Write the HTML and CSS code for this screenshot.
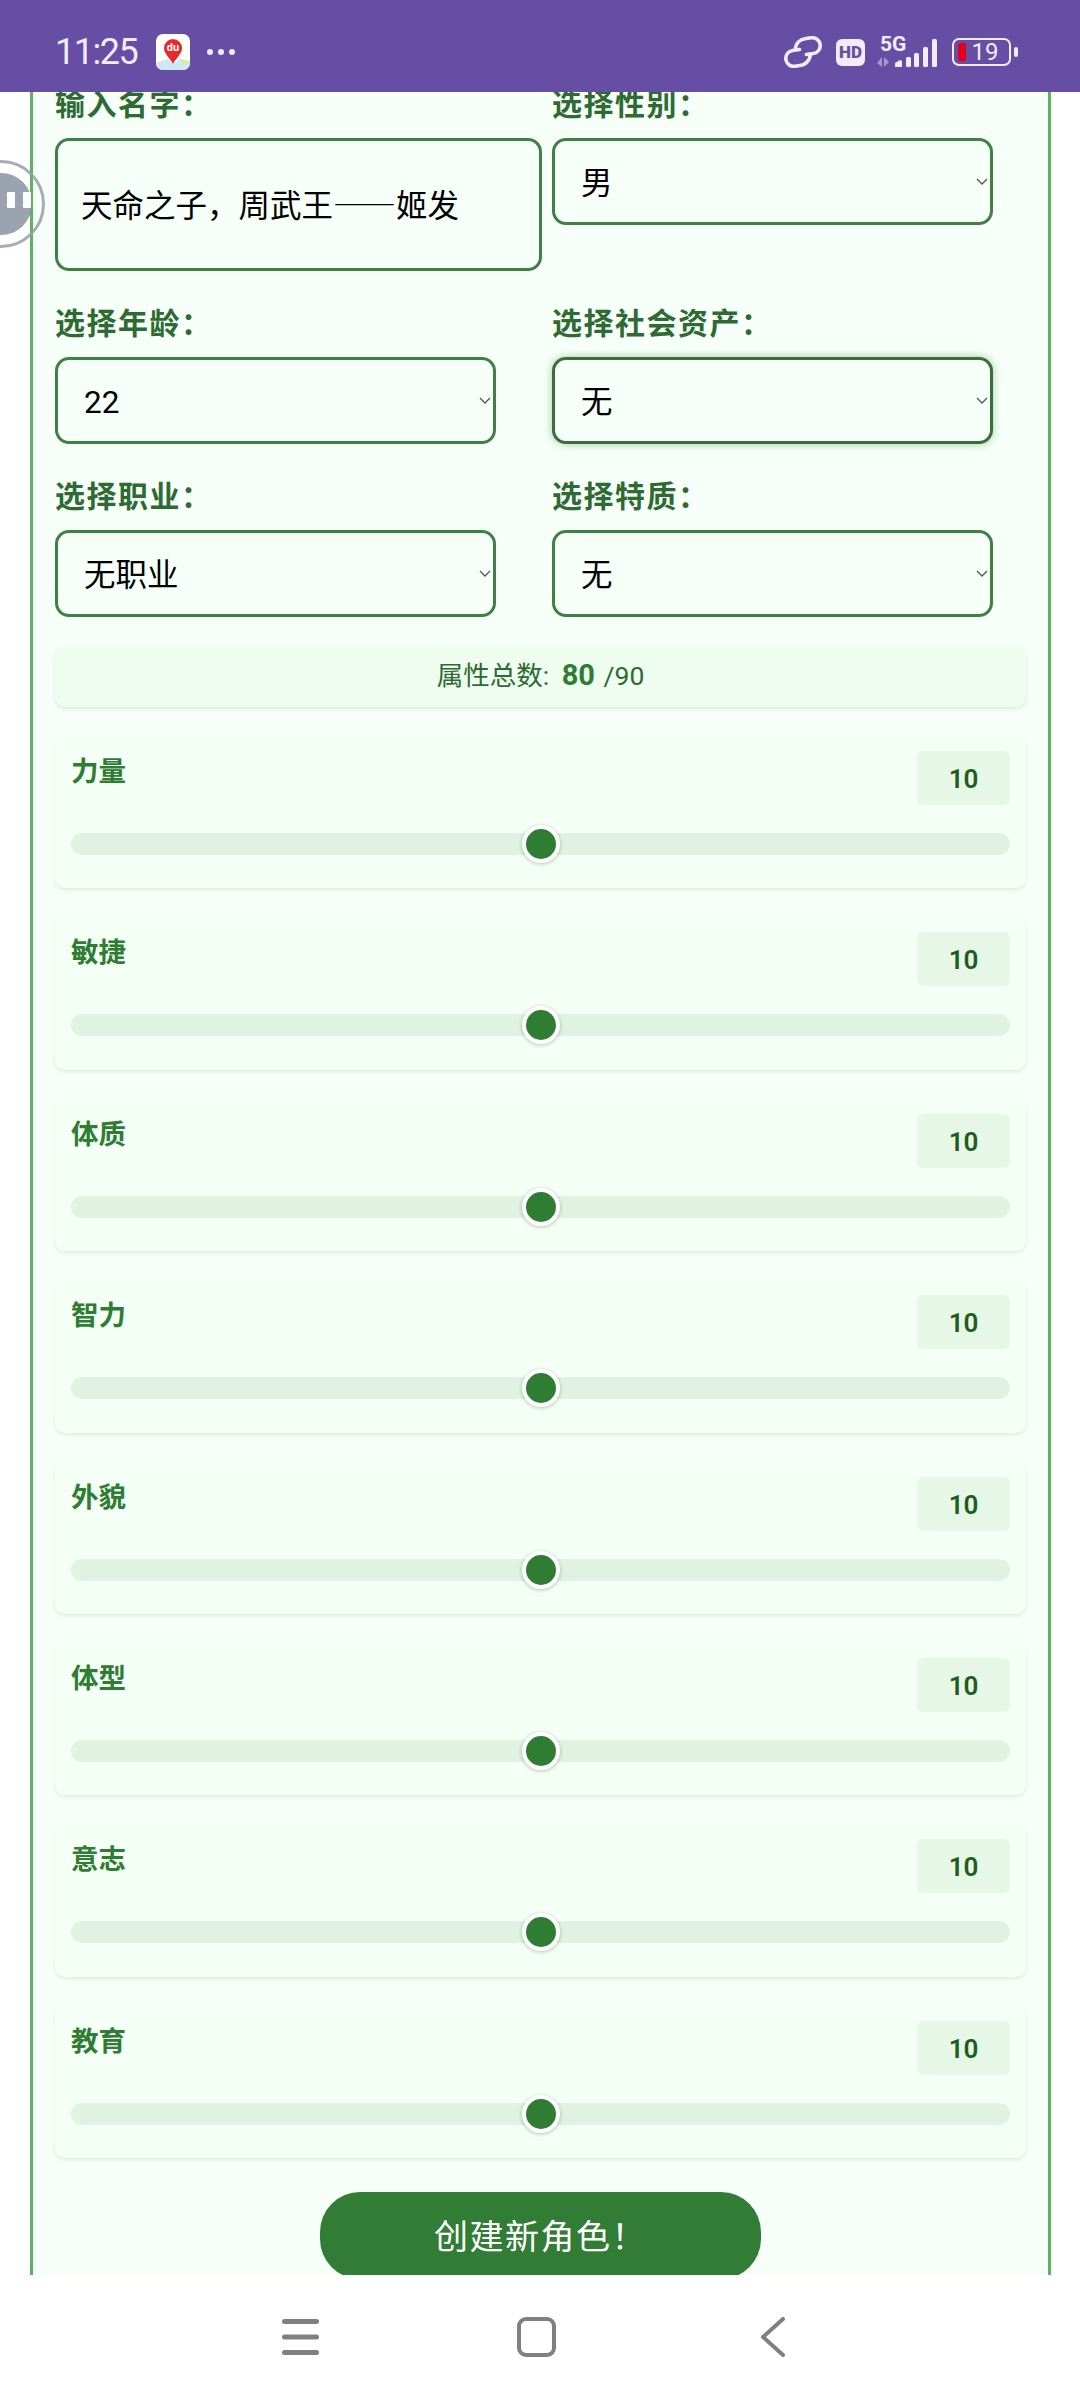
FILE: index.html
```html
<!DOCTYPE html>
<html lang="zh-CN">
<head>
    <meta charset="UTF-8">
    <meta name="viewport" content="width=device-width, initial-scale=1.0">
    <title>创建新角色</title>
    <link rel="stylesheet" href="styles.css">
</head>
<body>
    <div class="screen">
        <header class="status-bar">
            <div class="status-left">
                <span class="clock">11:25</span>
                <span class="map-icon">
                    <svg width="34" height="36" viewBox="0 0 34 36">
                        <rect width="34" height="36" rx="7" fill="#fff"/>
                        <path d="M0 29 L11 25 L17 30 L24 25 L34 28 V29 A7 7 0 0 1 27 36 H7 A7 7 0 0 1 0 29 Z" fill="#cfe8f7"/>
                        <path d="M24 25 L34 27 V30 L27 31 Z" fill="#d5eda0"/>
                        <path d="M17 30 C14 24 8 20 8 14 A9 9 0 0 1 26 14 C26 20 20 24 17 30 Z" fill="#e8282b"/>
                        <text x="17" y="17" class="map-du">du</text>
                    </svg>
                </span>
                <span class="dots"><i></i><i></i><i></i></span>
            </div>
            <div class="status-right">
                <svg class="link-icon" width="42" height="32" viewBox="0 0 42 32" fill="none" stroke="#f1ebfa" stroke-width="3.600" stroke-linecap="round">
                    <g transform="rotate(-8 21 16)">
                        <path d="M14 12 C15 6 20 3 26 3 H31 A8 8 0 0 1 31 19 H24"/>
                        <path d="M28 19 C27 25 22 29 16 29 H11 A8 8 0 0 1 11 13 H18"/>
                    </g>
                </svg>
                <span class="hd-icon">HD</span>
                <span class="signal">
                    <span class="net">5G</span>
                    <svg width="60" height="30" viewBox="0 0 60 30">
                        <path d="M5 19 V29 L0 25 Z M7 19 L12 24 L7 29 Z" fill="#a797cf"/>
                        <path d="M18 29 V25 L23 22 Q25 22 25 24 V29 Z" fill="#f1ebfa"/>
                        <rect x="29" y="19" width="5" height="10" rx="1.500" fill="#f1ebfa"/>
                        <rect x="37" y="15" width="5" height="14" rx="1.500" fill="#f1ebfa"/>
                        <rect x="46" y="9" width="5" height="20" rx="1.500" fill="#f1ebfa"/>
                        <rect x="55" y="1" width="5" height="28" rx="1.500" fill="#f1ebfa"/>
                    </svg>
                </span>
                <span class="battery">
                    <span class="battery-shell">
                        <span class="battery-fill"></span>
                        <span class="battery-num">19</span>
                    </span>
                    <span class="battery-tip"></span>
                </span>
            </div>
        </header>

        <main class="page">
            <div class="panel">
                <form class="form-grid">
                    <div class="field">
                        <label for="name">输入名字：</label>
                        <textarea id="name" class="name-input" rows="1">天命之子，周武王——姬发</textarea>
                    </div>
                    <div class="field">
                        <label for="gender">选择性别：</label>
                        <div class="select-wrap">
                            <select id="gender"><option>男</option><option>女</option></select>
                            <svg class="chevron" width="12" height="7" viewBox="0 0 12 7"><path d="M1 1 L6 6 L11 1" fill="none" stroke="#555" stroke-width="1.300"/></svg>
                        </div>
                    </div>
                    <div class="field">
                        <label for="age">选择年龄：</label>
                        <div class="select-wrap">
                            <select id="age"><option>22</option></select>
                            <svg class="chevron" width="12" height="7" viewBox="0 0 12 7"><path d="M1 1 L6 6 L11 1" fill="none" stroke="#555" stroke-width="1.300"/></svg>
                        </div>
                    </div>
                    <div class="field">
                        <label for="assets">选择社会资产：</label>
                        <div class="select-wrap">
                            <select id="assets" class="focused"><option>无</option></select>
                            <svg class="chevron" width="12" height="7" viewBox="0 0 12 7"><path d="M1 1 L6 6 L11 1" fill="none" stroke="#555" stroke-width="1.300"/></svg>
                        </div>
                    </div>
                    <div class="field">
                        <label for="job">选择职业：</label>
                        <div class="select-wrap">
                            <select id="job"><option>无职业</option></select>
                            <svg class="chevron" width="12" height="7" viewBox="0 0 12 7"><path d="M1 1 L6 6 L11 1" fill="none" stroke="#555" stroke-width="1.300"/></svg>
                        </div>
                    </div>
                    <div class="field">
                        <label for="trait">选择特质：</label>
                        <div class="select-wrap">
                            <select id="trait"><option>无</option></select>
                            <svg class="chevron" width="12" height="7" viewBox="0 0 12 7"><path d="M1 1 L6 6 L11 1" fill="none" stroke="#555" stroke-width="1.300"/></svg>
                        </div>
                    </div>
                </form>

                <div class="total-box">属性总数: <strong>80</strong> /90</div>

                <div class="attr-list">
                    <div class="attr-card">
                        <div class="attr-head"><span class="attr-name">力量</span><span class="attr-value">10</span></div>
                        <input type="range" min="0" max="20" value="10" aria-label="力量">
                    </div>
                    <div class="attr-card">
                        <div class="attr-head"><span class="attr-name">敏捷</span><span class="attr-value">10</span></div>
                        <input type="range" min="0" max="20" value="10" aria-label="敏捷">
                    </div>
                    <div class="attr-card">
                        <div class="attr-head"><span class="attr-name">体质</span><span class="attr-value">10</span></div>
                        <input type="range" min="0" max="20" value="10" aria-label="体质">
                    </div>
                    <div class="attr-card">
                        <div class="attr-head"><span class="attr-name">智力</span><span class="attr-value">10</span></div>
                        <input type="range" min="0" max="20" value="10" aria-label="智力">
                    </div>
                    <div class="attr-card">
                        <div class="attr-head"><span class="attr-name">外貌</span><span class="attr-value">10</span></div>
                        <input type="range" min="0" max="20" value="10" aria-label="外貌">
                    </div>
                    <div class="attr-card">
                        <div class="attr-head"><span class="attr-name">体型</span><span class="attr-value">10</span></div>
                        <input type="range" min="0" max="20" value="10" aria-label="体型">
                    </div>
                    <div class="attr-card">
                        <div class="attr-head"><span class="attr-name">意志</span><span class="attr-value">10</span></div>
                        <input type="range" min="0" max="20" value="10" aria-label="意志">
                    </div>
                    <div class="attr-card">
                        <div class="attr-head"><span class="attr-name">教育</span><span class="attr-value">10</span></div>
                        <input type="range" min="0" max="20" value="10" aria-label="教育">
                    </div>
                </div>

                <button class="create-btn" type="button">创建新角色！</button>
            </div>
        </main>

        <nav class="nav-bar">
            <svg width="38" height="38" viewBox="0 0 38 38" fill="#808080">
                <rect x="0" y="2" width="37" height="5" rx="2.500"/>
                <rect x="0" y="17.500" width="37" height="5" rx="2.500"/>
                <rect x="0" y="33" width="37" height="5" rx="2.500"/>
            </svg>
            <svg width="40" height="40" viewBox="0 0 40 40" fill="none" stroke="#808080" stroke-width="4">
                <rect x="2" y="2" width="35" height="36" rx="7"/>
            </svg>
            <svg class="nav-back" width="26" height="40" viewBox="0 0 26 40" fill="none" stroke="#808080" stroke-width="4" stroke-linecap="round" stroke-linejoin="round">
                <path d="M23 2 L3 20 L23 38"/>
            </svg>
        </nav>

        <div class="float-ball">
            <span class="float-core"><i></i><i></i></span>
        </div>
    </div>
</body>
</html>
```

FILE: styles.css
```css
* {
    box-sizing: border-box;
}

body {
    margin: 0;
    background: #fff;
    font-family: Roboto, "Noto Sans CJK SC", sans-serif;
}

.screen {
    position: relative;
    display: flex;
    flex-direction: column;
    width: 1080px;
    height: 2401px;
    overflow: hidden;
}

/* status bar */
.status-bar {
    display: flex;
    justify-content: space-between;
    align-items: center;
    flex: 0 0 92px;
    padding: 12px 62px 0 55px;
    background: #654ea3;
    position: relative;
    z-index: 2;
}

.status-left, .status-right {
    display: flex;
    align-items: center;
}

.clock {
    width: 81px;
    margin-right: 20px;
    color: #f1ebfa;
    font-size: 36px;
    letter-spacing: -1.500px;
    white-space: nowrap;
}

.map-icon {
    display: flex;
    margin-right: 17px;
}

.map-du {
    fill: #fff;
    font: 700 11px Roboto, sans-serif;
    text-anchor: middle;
}

.dots {
    display: flex;
    gap: 5px;
}

.dots i {
    width: 6px;
    height: 6px;
    border-radius: 50%;
    background: #f1ebfa;
}

.link-icon {
    margin-right: 12px;
}

.hd-icon {
    width: 29px;
    height: 27px;
    margin-right: 12px;
    border-radius: 6px;
    background: #f1ebfa;
    color: #654ea3;
    font-size: 17px;
    font-weight: 900;
    line-height: 27px;
    text-align: center;
}

.signal {
    position: relative;
    width: 60px;
    height: 32px;
    margin-right: 15px;
}

.net {
    position: absolute;
    top: -4px;
    left: 3px;
    color: #f1ebfa;
    font-size: 21px;
    font-weight: 700;
}

.signal svg {
    position: absolute;
    left: 0;
    top: 2px;
}

.battery {
    display: flex;
    align-items: center;
    gap: 3px;
}

.battery-shell {
    display: flex;
    align-items: center;
    width: 59px;
    height: 28px;
    padding-left: 3.500px;
    border: 2.500px solid #f1ebfa;
    border-radius: 7px;
}

.battery-fill {
    width: 8px;
    height: 18px;
    border-radius: 2px;
    background: #e3001b;
}

.battery-num {
    margin-left: 6px;
    color: #f1ebfa;
    font-size: 24px;
    line-height: 23px;
}

.battery-tip {
    width: 4px;
    height: 10px;
    border-radius: 2px;
    background: #f1ebfa;
}

/* page content, scrolled a little under the status bar */
.page {
    flex: 1;
    min-height: 0;
    overflow: hidden;
    padding: 0 29px 0 30px;
}

.panel {
    height: 2400px;
    margin-top: -7px;
    padding: 0 22px;
    background: #f6fff8;
    border: solid #5cb362;
    border-width: 0 3px;
}

.form-grid {
    display: grid;
    grid-template-columns: 441px 441px;
    column-gap: 56px;
    row-gap: 33px;
    align-items: start;
}

.field label {
    display: block;
    height: 38px;
    margin-bottom: 15px;
    color: #2e6b33;
    font-size: 30px;
    font-weight: 700;
    line-height: 40px;
    letter-spacing: 1.500px;
}

.name-input {
    display: block;
    width: 487px;
    height: 133px;
    padding: 43px 0 0 23px;
    background: #f6fff8;
    border: 3px solid #3f8045;
    border-radius: 14px;
    color: #000;
    font: 400 31.500px/38px "Noto Sans CJK SC", sans-serif;
    resize: none;
    overflow: hidden;
    outline: none;
}

.select-wrap {
    position: relative;
}

.select-wrap select {
    display: block;
    width: 100%;
    height: 87px;
    padding: 3px 26px 0;
    background: #f6fff8;
    border: 3px solid #3f8045;
    border-radius: 14px;
    color: #000;
    font: 400 31.500px Roboto, "Noto Sans CJK SC", sans-serif;
    appearance: none;
    outline: none;
}

.select-wrap select.focused {
    border-color: #3a6e3f;
    box-shadow: 0 0 8px rgba(46, 125, 50, 0.4);
}

.chevron {
    position: absolute;
    top: 40px;
    right: 5px;
}

/* attributes */
.total-box {
    height: 61px;
    margin-top: 29px;
    background: #effdf0;
    border-radius: 10px;
    box-shadow: 0 2px 4px rgba(0, 0, 0, 0.1);
    color: #2e6b33;
    font-size: 26.500px;
    line-height: 58px;
    text-align: center;
}

.total-box strong {
    margin: 0 2px 0 6px;
    color: #2e7d32;
    font-size: 29px;
    font-weight: 700;
}

.attr-list {
    display: flex;
    flex-direction: column;
    gap: 29px;
    margin-top: 29px;
}

.attr-card {
    height: 152.400px;
    padding: 15px 16px 0;
    background: #f4fff5;
    border-radius: 10px;
    box-shadow: 0 2px 4px rgba(0, 0, 0, 0.09);
}

.attr-head {
    display: flex;
    justify-content: space-between;
    align-items: flex-start;
}

.attr-name {
    margin-top: 3px;
    color: #2e7d32;
    font-size: 27.500px;
    font-weight: 700;
    line-height: 36px;
}

.attr-value {
    width: 93px;
    height: 54px;
    background: #e6f6e7;
    border-radius: 6px;
    color: #1b5e20;
    font-size: 26px;
    font-weight: 600;
    line-height: 56px;
    text-align: center;
}

.attr-card input[type="range"] {
    display: block;
    width: 100%;
    height: 22px;
    margin: 28px 0 0;
    background: #e0f2e1;
    border-radius: 11px;
    appearance: none;
    outline: none;
}

.attr-card input[type="range"]::-webkit-slider-thumb {
    width: 38px;
    height: 38px;
    background: #2e7d32;
    border: 4px solid #fff;
    border-radius: 50%;
    box-shadow: 0 1px 4px rgba(0, 0, 0, 0.25);
    appearance: none;
}

.create-btn {
    display: block;
    width: 441px;
    height: 87px;
    margin: 34px auto 0;
    padding: 0 0 2px;
    background: #317d35;
    border: none;
    border-radius: 40px;
    color: #fff;
    font-family: "Noto Sans CJK SC", sans-serif;
    font-size: 34px;
    letter-spacing: 1.500px;
}

/* bottom nav */
.nav-bar {
    position: relative;
    z-index: 2;
    display: flex;
    align-items: flex-start;
    flex: 0 0 126px;
    gap: 197px;
    padding: 42px 0 0 282px;
    background: #fff;
}

.nav-back {
    margin-left: 6px;
}

/* floating ball over the form */
.float-ball {
    position: absolute;
    top: 160px;
    left: -43px;
    display: flex;
    align-items: center;
    justify-content: center;
    width: 88px;
    height: 88px;
    border: 3.500px solid rgba(150, 158, 172, 0.85);
    border-radius: 50%;
}

.float-core {
    display: flex;
    justify-content: flex-end;
    gap: 8px;
    width: 62px;
    height: 62px;
    padding: 19px 1px 0 0;
    border-radius: 50%;
    background: rgba(130, 140, 158, 0.8);
}

.float-core i {
    width: 8px;
    height: 16px;
    border-radius: 1px;
    background: #fff;
}
```
